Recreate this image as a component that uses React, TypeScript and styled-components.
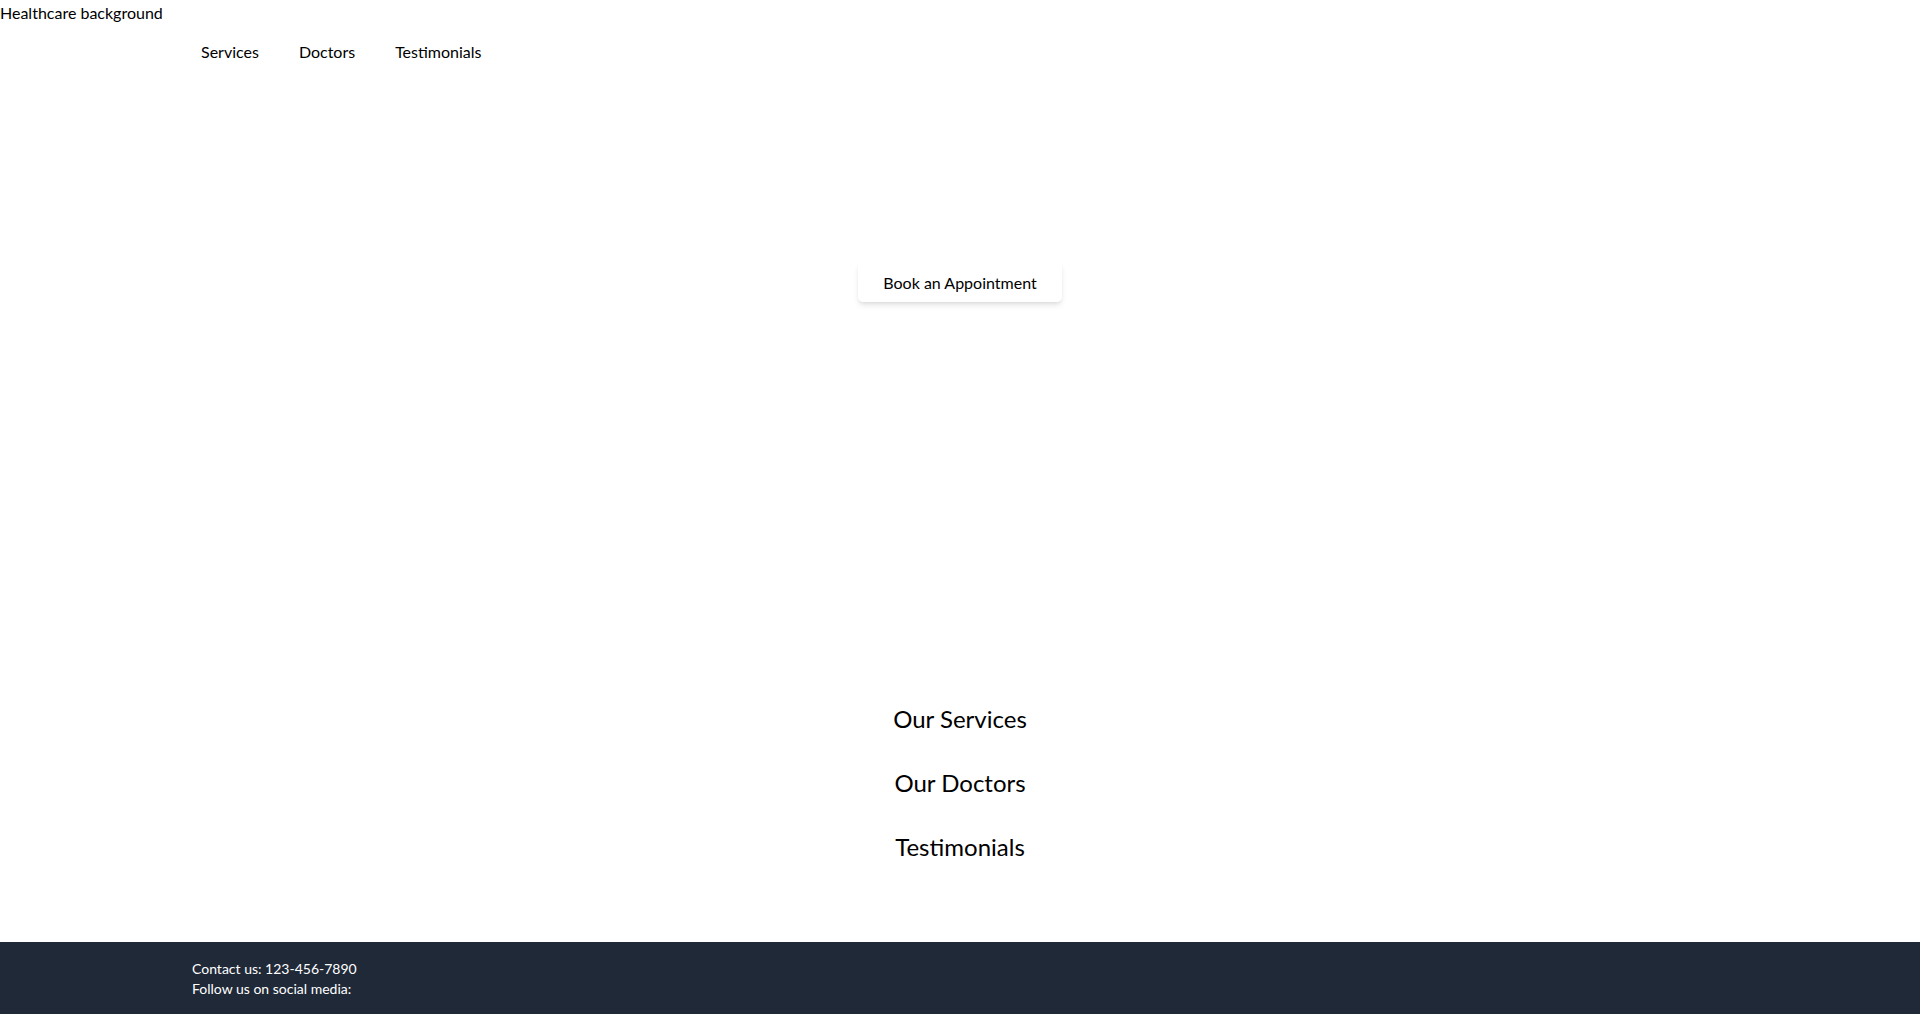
import styled, { createGlobalStyle } from "styled-components";

const GlobalStyle = createGlobalStyle`
  *, *::before, *::after {
    box-sizing: border-box;
  }

  body {
    margin: 0;
    font-family: Lato, Roboto, "Noto Sans", "Liberation Sans", sans-serif;
    color: #000;
    background: #fff;
  }
`;

const Container = styled.div`
  max-width: 1536px;
  margin: 0 auto;
`;

const Header = styled.header`
  position: relative;
`;

// stands in for the broken hero image, which only shows its alt text
const ImageAlt = styled.div`
  height: 24px;
  padding-top: 1px;
  font-size: 16px;
  line-height: 24px;
`;

const Nav = styled(Container)`
  display: flex;
  gap: 40px;
  padding: 16px 0 16px 9px;
  font-size: 16px;
  line-height: 24px;
`;

const NavLink = styled.a`
  color: inherit;
  text-decoration: none;
`;

const Hero = styled.section`
  height: 609px;
  padding-top: 182px;
  display: flex;
  flex-direction: column;
  align-items: center;
`;

const BookButton = styled.button`
  font: inherit;
  font-size: 16px;
  line-height: 24px;
  color: #000;
  background: #fff;
  border: none;
  border-radius: 5px;
  padding: 9px 24px 7px;
  width: 204px;
  box-shadow: 0 4px 6px -1px rgba(0, 0, 0, 0.1), 0 2px 4px -2px rgba(0, 0, 0, 0.1);
  cursor: pointer;
`;

const Section = styled.section`
  padding: 14px 0 18px;
`;

const SectionTitle = styled.h2`
  margin: 0;
  font-size: 24px;
  line-height: 32px;
  font-weight: 400;
  text-align: center;
`;

const Footer = styled.footer`
  margin-top: 61px;
  background: #1f2937;
  color: #fff;
  padding: 17px 0 15px;
  font-size: 14px;
  line-height: 20px;
`;

const FooterLine = styled.p`
  margin: 0;
`;

const sections = ["Our Services", "Our Doctors", "Testimonials"];

export default function App() {
  return (
    <>
      <GlobalStyle />
      <Header>
        <ImageAlt>Healthcare background</ImageAlt>
        <Nav as="nav">
          <NavLink href="#services">Services</NavLink>
          <NavLink href="#doctors">Doctors</NavLink>
          <NavLink href="#testimonials">Testimonials</NavLink>
        </Nav>
      </Header>

      <Hero>
        <BookButton>Book an Appointment</BookButton>
      </Hero>

      {sections.map((title) => (
        <Section key={title}>
          <SectionTitle>{title}</SectionTitle>
        </Section>
      ))}

      <Footer>
        <Container>
          <FooterLine>Contact us: 123-456-7890</FooterLine>
          <FooterLine>Follow us on social media:</FooterLine>
        </Container>
      </Footer>
    </>
  );
}
